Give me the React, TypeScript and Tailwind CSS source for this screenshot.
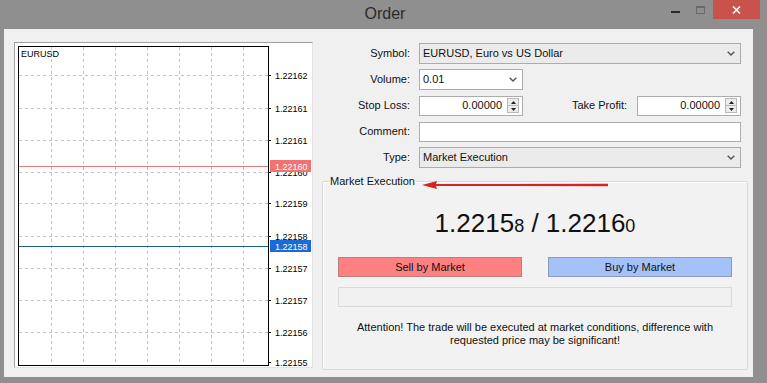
import React from "react";

const gridX = [36, 68, 100, 132, 164, 196, 228];
const levels = [
  { y: 32, v: "1.22162" },
  { y: 65, v: "1.22161" },
  { y: 97, v: "1.22161" },
  { y: 129, v: "1.22160" },
  { y: 160, v: "1.22159" },
  { y: 193, v: "1.22158" },
  { y: 225, v: "1.22157" },
  { y: 257, v: "1.22157" },
  { y: 289, v: "1.22156" },
  { y: 319, v: "1.22155" },
];

function Chart() {
  return (
    <svg width="297" height="324" viewBox="0 0 297 324" className="block">
      <rect x="0" y="0" width="297" height="324" fill="#ffffff" />
      {gridX.map((x) => (
        <line key={x} x1={x + 0.5} y1="4" x2={x + 0.5} y2="322" stroke="#c4c4c4" strokeDasharray="3 3" />
      ))}
      {levels.slice(0, 9).map((l) => (
        <line key={l.y} x1="4" y1={l.y + 0.5} x2="253" y2={l.y + 0.5} stroke="#c4c4c4" strokeDasharray="3 3" />
      ))}
      {levels.map((l) => (
        <g key={"t" + l.y}>
          <line x1="253" y1={l.y + 0.5} x2="256" y2={l.y + 0.5} stroke="#000" />
          <text x="260" y={l.y + 3.5} fontSize="9" fill="#000" fontFamily="'Liberation Sans', Arial, sans-serif">
            {l.v}
          </text>
        </g>
      ))}
      <line x1="4" y1="123.5" x2="253" y2="123.5" stroke="#e07a72" />
      <line x1="4" y1="203.5" x2="253" y2="203.5" stroke="#1d5e8c" />
      <rect x="3.5" y="3.5" width="250" height="319" fill="none" stroke="#000" />
      <rect x="255" y="117" width="41" height="12" fill="#f07272" />
      <text x="260" y="126.5" fontSize="9" fill="#fff" fontFamily="'Liberation Sans', Arial, sans-serif">1.22160</text>
      <rect x="255" y="197" width="41" height="12" fill="#1b6bd6" />
      <text x="260" y="206.5" fontSize="9" fill="#fff" fontFamily="'Liberation Sans', Arial, sans-serif">1.22158</text>
      <text x="6" y="14" fontSize="9" fill="#000" fontFamily="'Liberation Sans', Arial, sans-serif">EURUSD</text>
    </svg>
  );
}

function Chevron() {
  return (
    <svg width="8" height="5" viewBox="0 0 8 5" className="shrink-0">
      <polyline points="0.7,0.7 4,4 7.3,0.7" fill="none" stroke="#555" strokeWidth="1.4" />
    </svg>
  );
}

function Spinner() {
  return (
    <div className="flex flex-col w-[12px] h-[15px] border border-[#b9b9b9] bg-[#ececec] shrink-0">
      <div className="flex-1 flex items-center justify-center border-b border-[#b9b9b9]">
        <svg width="5" height="3" viewBox="0 0 5 3"><path d="M0 3 L2.5 0 L5 3 Z" fill="#222" /></svg>
      </div>
      <div className="flex-1 flex items-center justify-center">
        <svg width="5" height="3" viewBox="0 0 5 3"><path d="M0 0 L2.5 3 L5 0 Z" fill="#222" /></svg>
      </div>
    </div>
  );
}

function Label({ children, w = "w-[88px]" }: { children: React.ReactNode; w?: string }) {
  return <div className={`${w} text-right shrink-0`}>{children}</div>;
}

function Select({ value, w, white }: { value: string; w: string; white?: boolean }) {
  return (
    <div
      className={`${w} h-[21px] ml-[9px] flex items-center justify-between pl-[3px] pr-[5px] border border-[#acacac] ${
        white ? "bg-white" : "bg-[#ebebeb]"
      }`}
    >
      <span>{value}</span>
      <Chevron />
    </div>
  );
}

function NumInput({ ml }: { ml: string }) {
  return (
    <div className={`w-[104px] h-[20px] ${ml} flex items-center justify-end pr-[3px] border border-[#acacac] bg-white`}>
      <span className="mr-[5px]">0.00000</span>
      <Spinner />
    </div>
  );
}

export default function App() {
  return (
    <div className="w-[767px] h-[383px] bg-[#8f8f8f] flex flex-col font-['Liberation_Sans',Arial,sans-serif] text-[11px] text-[#111] overflow-hidden">
      {/* title bar */}
      <div className="h-[29px] flex items-start shrink-0">
        <div className="flex-1 pl-[108px] pt-[4px] text-center text-[16px] leading-[20px] text-[#2a2a2a]">Order</div>
        <div className="w-[26px] h-[20px] flex items-center justify-center">
          <div className="w-[9px] h-[2px] bg-[#2a2a2a] mt-[4px]" />
        </div>
        <div className="w-[25px] h-[20px] flex items-start justify-center pt-[6px]">
          <div className="w-[9px] h-[8px] border border-[#6a6a6a] border-t-2" />
        </div>
        <div className="w-[47px] h-[19px] bg-[#c9524c] flex items-center justify-center">
          <svg width="9" height="8" viewBox="0 0 9 8">
            <path d="M1 0.5 L8 7.5 M8 0.5 L1 7.5" stroke="#fff" strokeWidth="1.6" />
          </svg>
        </div>
        <div className="w-[7px]" />
      </div>

      {/* client area */}
      <div className="ml-[4px] w-[749px] h-[348px] bg-[#f0f0f0] flex items-start">
        <div className="ml-[10px] mt-[13px] border border-[#a0a0a0] border-r-[#e2e2e2] border-b-[#e2e2e2]">
          <Chart />
        </div>

        <div className="relative ml-[9px] mt-[14px] w-[426px] flex flex-col">
          <div className="flex items-center h-[21px]">
            <Label>Symbol:</Label>
            <Select value="EURUSD, Euro vs US Dollar" w="w-[322px]" />
          </div>
          <div className="flex items-center h-[21px] mt-[5px]">
            <Label>Volume:</Label>
            <Select value="0.01" w="w-[104px]" white />
          </div>
          <div className="flex items-center h-[21px] mt-[5px]">
            <Label>Stop Loss:</Label>
            <NumInput ml="ml-[9px]" />
            <Label w="w-[104px]">Take Profit:</Label>
            <NumInput ml="ml-[10px]" />
          </div>
          <div className="flex items-center h-[21px] mt-[5px]">
            <Label>Comment:</Label>
            <div className="w-[322px] h-[20px] ml-[9px] border border-[#acacac] bg-white" />
          </div>
          <div className="flex items-center h-[21px] mt-[5px]">
            <Label>Type:</Label>
            <Select value="Market Execution" w="w-[322px]" />
          </div>

          <fieldset className="mt-[6px] w-[426px] h-[196px] border border-[#d9d9d9] rounded-[2px] bg-[#f2f2f2] shadow-[inset_1px_1px_0_#fff]">
            <legend className="ml-[6px] px-[1px] leading-[14px] text-[#111]">Market Execution</legend>
            <div className="mt-[20px] h-[30px] flex items-baseline justify-center leading-[30px] text-[#111]">
              <span className="text-[26px]">1.2215</span>
              <span className="text-[18px]">8</span>
              <span className="text-[26px] whitespace-pre"> / 1.2216</span>
              <span className="text-[18px]">0</span>
            </div>
            <div className="mt-[19px] px-[15px] grid grid-cols-2 gap-[26px]">
              <div className="h-[20px] bg-[#ff8080] border border-[#b98080] flex items-center justify-center">Sell by Market</div>
              <div className="h-[20px] bg-[#a4c2f7] border border-[#8a9cbc] flex items-center justify-center">Buy by Market</div>
            </div>
            <div className="mt-[10px] mx-[15px] h-[20px] border border-[#d9d9d9] bg-[#f0f0f0]" />
            <div className="mt-[14px] text-center leading-[13px] text-[#111]">
              Attention! The trade will be executed at market conditions, difference with
              <br />
              requested price may be significant!
            </div>
          </fieldset>

          {/* annotation arrow */}
          <svg width="188" height="10" viewBox="0 0 188 10" className="absolute left-[100px] top-[137px]">
            <path d="M0 5 L15 1 L14 4 L186 3.8 L186 6.2 L14 6 L15 9 Z" fill="#d42424" />
          </svg>
        </div>
      </div>
    </div>
  );
}
